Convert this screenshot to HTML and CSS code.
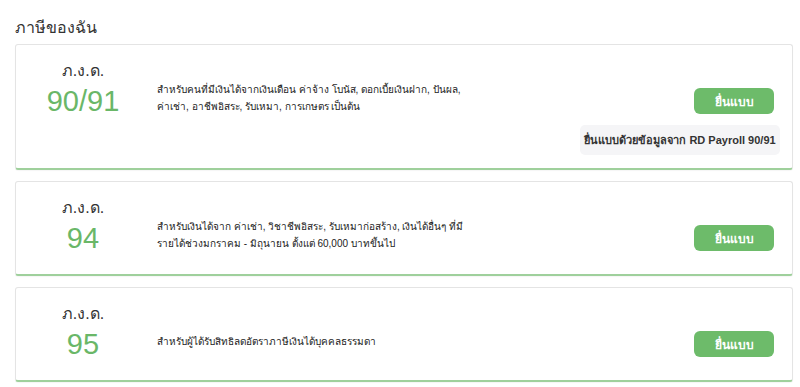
FILE: index.html
```html
<!DOCTYPE html>
<html lang="th">
<head>
    <meta charset="UTF-8">
    <meta name="viewport" content="width=device-width, initial-scale=1.0">
    <title>ภาษีของฉัน</title>
    <link rel="stylesheet" href="styles.css">
</head>
<body>
    <h2 class="page-title">ภาษีของฉัน</h2>

    <div class="tax-card">
        <div class="form-label">ภ.ง.ด.</div>
        <div class="tax-row">
            <div class="form-number">90/91</div>
            <div class="tax-desc">
                สำหรับคนที่มีเงินได้จากเงินเดือน ค่าจ้าง โบนัส, ดอกเบี้ยเงินฝาก, ปันผล,<br>
                ค่าเช่า, อาชีพอิสระ, รับเหมา, การเกษตร เป็นต้น
            </div>
            <button class="btn-file" type="button">ยื่นแบบ</button>
        </div>
        <div class="payroll-row">
            <a class="payroll-link" href="#">ยื่นแบบด้วยข้อมูลจาก RD Payroll 90/91</a>
        </div>
    </div>

    <div class="tax-card">
        <div class="form-label">ภ.ง.ด.</div>
        <div class="tax-row">
            <div class="form-number">94</div>
            <div class="tax-desc">
                สำหรับเงินได้จาก ค่าเช่า, วิชาชีพอิสระ, รับเหมาก่อสร้าง, เงินได้อื่นๆ ที่มี<br>
                รายได้ช่วงมกราคม - มิถุนายน ตั้งแต่ 60,000 บาทขึ้นไป
            </div>
            <button class="btn-file" type="button">ยื่นแบบ</button>
        </div>
    </div>

    <div class="tax-card">
        <div class="form-label">ภ.ง.ด.</div>
        <div class="tax-row">
            <div class="form-number">95</div>
            <div class="tax-desc">
                สำหรับผู้ได้รับสิทธิลดอัตราภาษีเงินได้บุคคลธรรมดา
            </div>
            <button class="btn-file" type="button">ยื่นแบบ</button>
        </div>
    </div>
</body>
</html>
```

FILE: styles.css
```css
body {
    font-family: "Liberation Sans", "Noto Sans", Arial, sans-serif;
    margin: 0;
    padding: 0 7px 0 15px;
    background-color: #fff;
    color: #333;
}
.page-title {
    font-size: 16px;
    font-weight: normal;
    margin: 0;
    padding-top: 17px;
    height: 27px;
    line-height: 22px;
}
.tax-card {
    border: 1px solid #e4e4e4;
    border-bottom: 2px solid #9fd09c;
    border-radius: 3px;
    margin-bottom: 11px;
    padding: 16px 12px 16px 0;
    box-shadow: 0 1px 1px rgba(0, 0, 0, 0.04);
}
.form-label {
    width: 134px;
    text-align: center;
    font-size: 16px;
    line-height: 20px;
}
.tax-row {
    display: flex;
    align-items: center;
    height: 40px;
}
.form-number {
    width: 134px;
    flex-shrink: 0;
    text-align: center;
    font-size: 29px;
    line-height: 40px;
    color: #6ab768;
}
.tax-desc {
    flex: 1;
    padding: 0 0 6px 7px;
    font-size: 10px;
    line-height: 17px;
    color: #222;
}
.btn-file {
    width: 80px;
    height: 26px;
    margin-right: 6px;
    background-color: #6dbb6a;
    color: #fff;
    border: none;
    border-radius: 6px;
    font-family: inherit;
    font-size: 12px;
    font-weight: bold;
    cursor: pointer;
}
.btn-file:hover {
    background-color: #5aa857;
}
.payroll-row {
    display: flex;
    justify-content: flex-end;
    margin: 4px 0 -3px;
}
.payroll-link {
    display: block;
    width: 200px;
    height: 30px;
    line-height: 30px;
    text-align: center;
    background-color: #f5f5f7;
    border-radius: 5px;
    font-size: 11px;
    font-weight: bold;
    color: #333;
    text-decoration: none;
}
```
